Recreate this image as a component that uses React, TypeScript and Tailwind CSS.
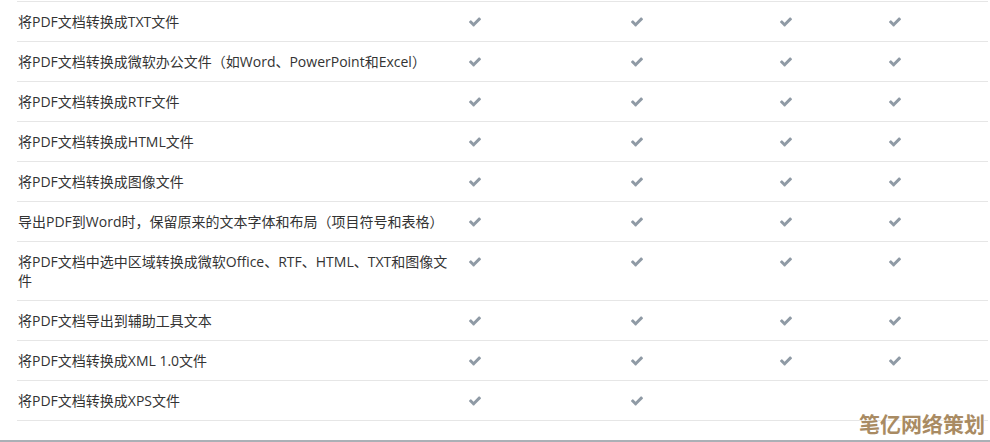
type Row = {
  label: string;
  checks: [boolean, boolean, boolean, boolean];
};

const rows: Row[] = [
  { label: "将PDF文档转换成TXT文件", checks: [true, true, true, true] },
  { label: "将PDF文档转换成微软办公文件（如Word、PowerPoint和Excel）", checks: [true, true, true, true] },
  { label: "将PDF文档转换成RTF文件", checks: [true, true, true, true] },
  { label: "将PDF文档转换成HTML文件", checks: [true, true, true, true] },
  { label: "将PDF文档转换成图像文件", checks: [true, true, true, true] },
  { label: "导出PDF到Word时，保留原来的文本字体和布局（项目符号和表格）", checks: [true, true, true, true] },
  { label: "将PDF文档中选中区域转换成微软Office、RTF、HTML、TXT和图像文件", checks: [true, true, true, true] },
  { label: "将PDF文档导出到辅助工具文本", checks: [true, true, true, true] },
  { label: "将PDF文档转换成XML 1.0文件", checks: [true, true, true, true] },
  { label: "将PDF文档转换成XPS文件", checks: [true, true, false, false] },
];

const colWidths = ["w-[162px]", "w-[149px]", "w-[109px]", "w-[108px]"];

function Check() {
  return (
    <svg width="12" height="10" viewBox="0 0 1550 1188" className="mt-[5px] fill-[#8f9aa5]">
      <path d="M1550 232q0 40-28 68l-724 724-136 136q-28 28-68 28t-68-28l-136-136-362-362q-28-28-28-68t28-68l136-136q28-28 68-28t68 28l294 295 656-657q28-28 68-28t68 28l136 136q28 28 28 68z" />
    </svg>
  );
}

export default function App() {
  return (
    <div
      className="relative h-[442px] w-[990px] overflow-hidden bg-white text-[14px] leading-[19px] text-[#333]"
      style={{ fontFamily: '"Open Sans", "Noto Sans CJK SC", sans-serif' }}
    >
      <div className="ml-[17px] mt-[1px] w-[971px]">
        {rows.map((row) => (
          <div key={row.label} className="flex border-b border-[#e6e6e6] first:border-t">
            <div className="w-[443px] py-[10px] pl-[1px] pr-[10px]">{row.label}</div>
            {row.checks.map((on, i) => (
              <div key={i} className={`${colWidths[i]} py-[10px] pl-[9px]`}>
                {on && <Check />}
              </div>
            ))}
          </div>
        ))}
      </div>
      <div className="absolute bottom-0 left-0 h-[2px] w-full bg-[#aab0b6]" />
      <div
        className="absolute right-[5px] top-[409px] text-[21px] font-bold leading-[28px] text-[#a98b63]"
        style={{ fontFamily: '"Noto Sans CJK SC", sans-serif', textShadow: "0 0 2px #fff, 0 0 2px #fff" }}
      >
        笔亿网络策划
      </div>
    </div>
  );
}
